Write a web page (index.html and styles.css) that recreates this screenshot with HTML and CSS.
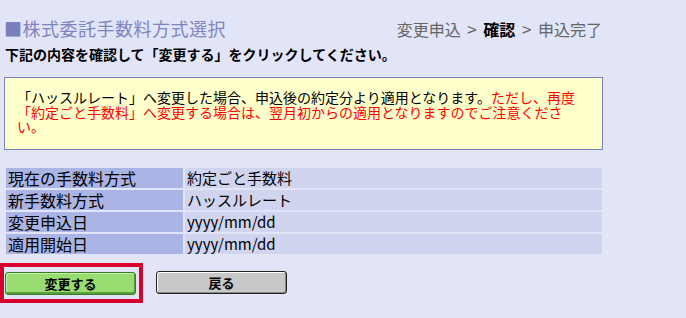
FILE: index.html
```html
<!DOCTYPE html>
<html lang="ja">
<head>
    <meta charset="UTF-8">
    <title>株式委託手数料方式選択</title>
    <link rel="stylesheet" href="styles.css">
</head>
<body>
    <div class="container">
        <div class="header">
            <h1><span class="mark">■</span>株式委託手数料方式選択</h1>
            <div class="steps">変更申込 <span class="sep">&gt;</span> <b>確認</b> <span class="sep">&gt;</span> 申込完了</div>
        </div>
        <p class="lead">下記の内容を確認して「変更する」をクリックしてください。</p>

        <div class="notice">「ハッスルレート」へ変更した場合、申込後の約定分より適用となります。<span class="warn">ただし、再度<br>「約定ごと手数料」へ変更する場合は、翌月初からの適用となりますのでご注意くださ<br>い。</span></div>

        <table class="detail">
            <tr><th>現在の手数料方式</th><td>約定ごと手数料</td></tr>
            <tr><th>新手数料方式</th><td>ハッスルレート</td></tr>
            <tr><th>変更申込日</th><td>yyyy/mm/dd</td></tr>
            <tr><th>適用開始日</th><td>yyyy/mm/dd</td></tr>
        </table>

        <div class="buttons">
            <span class="focus"><button class="btn btn-ok">変更する</button></span>
            <button class="btn btn-back">戻る</button>
        </div>
    </div>
</body>
</html>
```

FILE: styles.css
```css
body {
    margin: 0;
    background-color: #e2e4f8;
    font-family: "Noto Sans CJK JP", "Noto Sans", sans-serif;
    color: #000;
}
.container {
    width: 600px;
    padding: 18px 0 0 4px;
}
.header {
    display: flex;
    justify-content: space-between;
    align-items: flex-end;
    height: 20px;
}
h1 {
    margin: 0;
    font-size: 18px;
    line-height: 20px;
    font-weight: normal;
    color: #7f84bd;
    letter-spacing: 0.5px;
}
.mark {
    color: #7a7fbd;
}
.steps {
    font-size: 16px;
    line-height: 18px;
    color: #666;
    padding-right: 2px;
}
.steps b {
    color: #000;
}
.sep {
    font-size: 17px;
    margin: 0 3px;
}
.lead {
    margin: 8px 0 0 1px;
    font-size: 14px;
    line-height: 17px;
    font-weight: bold;
}
.notice {
    margin-top: 14px;
    width: 573px;
    background-color: #ffffcc;
    border: 1px solid #7b82c6;
    padding: 12px 12px 15px 12px;
    font-size: 14px;
    line-height: 14.5px;
    white-space: nowrap;
}
.warn {
    color: #ff0000;
}
.detail {
    margin-top: 16px;
    width: 600px;
    border-spacing: 2px;
}
.detail th, .detail td {
    height: 20px;
    padding: 0 0 0 2px;
    text-align: left;
    white-space: nowrap;
}
.detail th {
    width: 175px;
    background-color: #aab5e5;
    font-size: 16px;
    font-weight: normal;
    line-height: 20px;
}
.detail td {
    background-color: #d0d4ee;
    font-size: 15px;
    line-height: 20px;
}
.buttons {
    display: flex;
    align-items: center;
    margin: 7px 0 0 -4px;
}
.focus {
    display: block;
    border: 4px solid #d6002a;
    padding: 5px 3px 4px 1px;
}
.btn {
    display: block;
    width: 131px;
    height: 23px;
    border-radius: 3px;
    font-family: "Noto Sans CJK JP", sans-serif;
    font-size: 13px;
    font-weight: bold;
    line-height: 19px;
    color: #000;
    padding: 0;
    cursor: pointer;
}
.btn-ok {
    background-color: #98dc72;
    border: 1px solid #3e7a2c;
    box-shadow: inset -1px -2px 0 #5aa03e, inset 1px 1px 0 #c4f0a8;
}
.btn-back {
    margin-left: 13px;
    background-color: #c8c8c8;
    border: 1px solid #222;
    box-shadow: inset -1px -1px 0 #888, inset 1px 1px 0 #fff;
}
```
